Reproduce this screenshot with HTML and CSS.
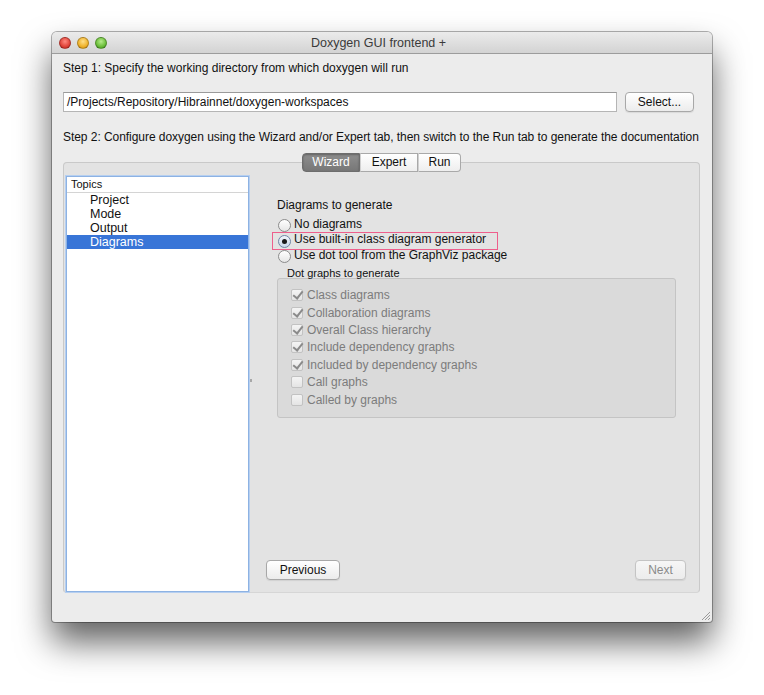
FILE: index.html
```html
<!DOCTYPE html>
<html lang="en">
<head>
  <meta charset="UTF-8">
  <title>Doxygen GUI frontend +</title>
  <link rel="stylesheet" href="styles.css">
</head>
<body>
<div class="window">
  <!-- Title bar -->
  <div class="titlebar">
    <div class="lights">
      <span class="light red"></span>
      <span class="light yellow"></span>
      <span class="light green"></span>
    </div>
    <div class="title">Doxygen GUI frontend +</div>
  </div>

  <div class="content">
    <p class="step step1">Step 1: Specify the working directory from which doxygen will run</p>
    <div class="dir-row">
      <div class="dir-input">/Projects/Repository/Hibrainnet/doxygen-workspaces</div>
      <button type="button" class="btn select-btn">Select...</button>
    </div>
    <p class="step step2">Step 2: Configure doxygen using the Wizard and/or Expert tab, then switch to the Run tab to generate the documentation</p>

    <!-- Tabs -->
    <div class="tabs">
      <span class="tab active">Wizard</span>
      <span class="tab">Expert</span>
      <span class="tab">Run</span>
    </div>

    <div class="pane">
      <div class="topics">
        <div class="topics-head">Topics</div>
        <ul class="topic-list">
          <li>Project</li>
          <li>Mode</li>
          <li>Output</li>
          <li class="selected">Diagrams</li>
        </ul>
      </div>
      <div class="splitter"><span class="grip"></span></div>

      <div class="page">
        <div class="page-body">
          <div class="heading">Diagrams to generate</div>
          <div class="radio-list">
            <label class="radio"><span class="radio-dot"></span>No diagrams</label>
            <label class="radio checked highlight"><span class="radio-dot"></span>Use built-in class diagram generator</label>
            <label class="radio"><span class="radio-dot"></span>Use dot tool from the GraphViz package</label>
          </div>

          <div class="group-title">Dot graphs to generate</div>
          <div class="group">
            <div class="check on"><span class="box"></span>Class diagrams</div>
            <div class="check on"><span class="box"></span>Collaboration diagrams</div>
            <div class="check on"><span class="box"></span>Overall Class hierarchy</div>
            <div class="check on"><span class="box"></span>Include dependency graphs</div>
            <div class="check on"><span class="box"></span>Included by dependency graphs</div>
            <div class="check"><span class="box"></span>Call graphs</div>
            <div class="check"><span class="box"></span>Called by graphs</div>
          </div>
        </div>

        <div class="nav">
          <button type="button" class="btn prev-btn">Previous</button>
          <button type="button" class="btn next-btn" disabled>Next</button>
        </div>
      </div>
    </div>
  </div>

  <!-- resize grip -->
  <svg class="resize-grip" width="12" height="12" viewBox="0 0 12 12">
    <path d="M11 3 L3 11 M11 6 L6 11 M11 9 L9 11" stroke="#9a9a9a" stroke-width="1" fill="none"/>
  </svg>
</div>
</body>
</html>
```

FILE: styles.css
```css
html, body {
  margin: 0;
  padding: 0;
  background: #ffffff;
}
body {
  font-family: "Liberation Sans", Arial, sans-serif;
  font-size: 12px;
  color: #111;
  width: 764px;
  height: 695px;
  overflow: hidden;
  padding: 32px 0 0 52px;
  box-sizing: border-box;
}
.window {
  position: relative;
  width: 660px;
  height: 590px;
  border-radius: 5px 5px 3px 3px;
  background: #ececec;
  box-shadow: 0 0 0 1px rgba(0, 0, 0, 0.3), 0 20px 34px rgba(0, 0, 0, 0.62);
  overflow: hidden;
}

/* Title bar */
.titlebar {
  height: 21px;
  display: flex;
  align-items: center;
  position: relative;
  background: linear-gradient(#ebebeb, #d3d3d3);
  border-bottom: 1px solid #9c9c9c;
}
.lights {
  display: flex;
  gap: 6px;
  padding-left: 7px;
}
.light {
  width: 12px;
  height: 12px;
  border-radius: 50%;
  box-sizing: border-box;
  border: 1px solid rgba(0, 0, 0, 0.25);
}
.red { background: radial-gradient(circle at 50% 35%, #ff8a80, #e0443a 60%, #b8231b); }
.yellow { background: radial-gradient(circle at 50% 35%, #ffe08a, #f0b32c 60%, #c98810); }
.green { background: radial-gradient(circle at 50% 35%, #b6ec8c, #6cbf3a 60%, #3f8f1f); }
.title {
  flex: 1;
  text-align: center;
  font-size: 12.5px;
  color: #3a3a3a;
  margin-right: 62px;
}

/* Content */
.content {
  padding: 0 12px 0 11px;
}
.step {
  margin: 0;
  line-height: 16px;
}
.step1 {
  margin-top: 6px;
}
.step2 {
  margin-top: 17px;
  white-space: nowrap;
  letter-spacing: -0.05px;
}
.dir-row {
  display: flex;
  align-items: center;
  margin-top: 16px;
  height: 20px;
}
.dir-input {
  width: 549px;
  height: 18px;
  line-height: 18px;
  padding-left: 3px;
  background: #fff;
  border: 1px solid #b5b5b5;
  border-top-color: #9a9a9a;
  box-sizing: content-box;
  font-size: 12px;
}
.btn {
  font-family: "Liberation Sans", Arial, sans-serif;
  font-size: 12px;
  color: #111;
  height: 20px;
  padding: 0;
  background: linear-gradient(#ffffff, #ececec);
  border: 1px solid #a8a8a8;
  border-radius: 4px;
  box-shadow: 0 1px 1px rgba(0, 0, 0, 0.08);
}
.select-btn {
  width: 69px;
  margin-left: 8px;
}

/* Tabs */
.tabs {
  position: relative;
  z-index: 1;
  display: flex;
  justify-content: center;
  margin-top: 8px;
  margin-bottom: -10px;
}
.tab {
  height: 17px;
  line-height: 17px;
  width: 56px;
  text-align: center;
  background: linear-gradient(#ffffff, #eeeeee);
  border: 1px solid #a9a9a9;
  border-left: 1px solid #d0d0d0;
}
.tab:first-child {
  border-left: 1px solid #6d6d6d;
  border-radius: 4px 0 0 4px;
}
.tab:last-child {
  width: 41px;
  border-radius: 0 4px 4px 0;
}
.tab.active {
  color: #fff;
  background: linear-gradient(#8e8e8e, #777777);
  border-color: #6d6d6d;
  box-shadow: inset 0 1px 2px rgba(0, 0, 0, 0.3);
}

/* Pane */
.pane {
  display: flex;
  height: 429px;
  background: #e3e3e3;
  border: 1px solid #c9c9c9;
  border-bottom-color: #d6d6d6;
  border-radius: 4px;
  box-sizing: content-box;
}
.topics {
  width: 181px;
  margin: 13px 0 0 2px;
  background: #fff;
  border: 1px solid #8db2e3;
  box-shadow: 0 0 0 1px #b6cff0;
  display: flex;
  flex-direction: column;
}
.topics-head {
  font-size: 11px;
  height: 15px;
  line-height: 15px;
  padding-left: 4px;
  border-bottom: 1px solid #d4d4d4;
  background: #fff;
}
.topic-list {
  list-style: none;
  margin: 0;
  padding: 0;
}
.topic-list li {
  height: 14px;
  line-height: 14px;
  font-size: 12.5px;
  padding-left: 23px;
}
.topic-list li.selected {
  background: #3875d7;
  color: #fff;
}
.splitter {
  width: 3px;
  display: flex;
  align-items: center;
}
.grip {
  width: 2px;
  height: 3px;
  margin-left: 1px;
  margin-top: 6px;
  background: #a8a8a8;
}

.page {
  flex: 1;
  display: flex;
  flex-direction: column;
}
.page-body {
  flex: 1;
  padding: 34px 23px 0 25px;
}
.heading {
  line-height: 16px;
}
.radio-list {
  margin-top: 3px;
  margin-left: 1px;
  display: flex;
  flex-direction: column;
}
.radio {
  display: flex;
  align-items: center;
  height: 15.5px;
  position: relative;
}
.radio-dot {
  width: 13px;
  height: 13px;
  box-sizing: border-box;
  border-radius: 50%;
  border: 1px solid #8c8c8c;
  background: linear-gradient(#ffffff, #e6e6e6);
  margin-right: 3px;
  margin-top: 4px;
  display: flex;
  align-items: center;
  justify-content: center;
}
.radio.checked .radio-dot {
  background: linear-gradient(#f2f6fb, #c9d8ea);
  border-color: #6f86a6;
}
.radio.checked .radio-dot::after {
  content: "";
  width: 5px;
  height: 5px;
  border-radius: 50%;
  background: #1a1a1a;
}
.highlight::before {
  content: "";
  position: absolute;
  left: -6px;
  top: 0;
  width: 224px;
  height: 16px;
  border: 1px solid #ee5f8c;
}

.group-title {
  font-size: 11px;
  line-height: 12px;
  margin: 4px 0 0 10px;
}
.group {
  margin-top: -1px;
  background: #dadada;
  border: 1px solid #c4c4c4;
  border-radius: 3px;
  height: 130px;
  padding: 8px 0 0 13px;
}
.check {
  display: flex;
  align-items: center;
  height: 17.4px;
  color: #7c7c7c;
}
.check .box {
  width: 12px;
  height: 12px;
  box-sizing: border-box;
  border: 1px solid #c2c2c2;
  border-radius: 2px;
  background: linear-gradient(#f4f4f4, #e4e4e4);
  margin-right: 4px;
  position: relative;
}
.check.on .box::after {
  content: "";
  position: absolute;
  left: 3px;
  top: -1px;
  width: 4px;
  height: 8px;
  border-right: 2px solid #8a8a8a;
  border-bottom: 2px solid #8a8a8a;
  transform: rotate(38deg);
}

.nav {
  display: flex;
  justify-content: space-between;
  padding: 0 13px 12px 14px;
}
.prev-btn {
  width: 74px;
}
.next-btn {
  width: 51px;
  color: #8a8a8a;
  border-color: #c4c4c4;
  background: linear-gradient(#f6f6f6, #ececec);
}

.resize-grip {
  position: absolute;
  right: 1px;
  bottom: 1px;
}
```
